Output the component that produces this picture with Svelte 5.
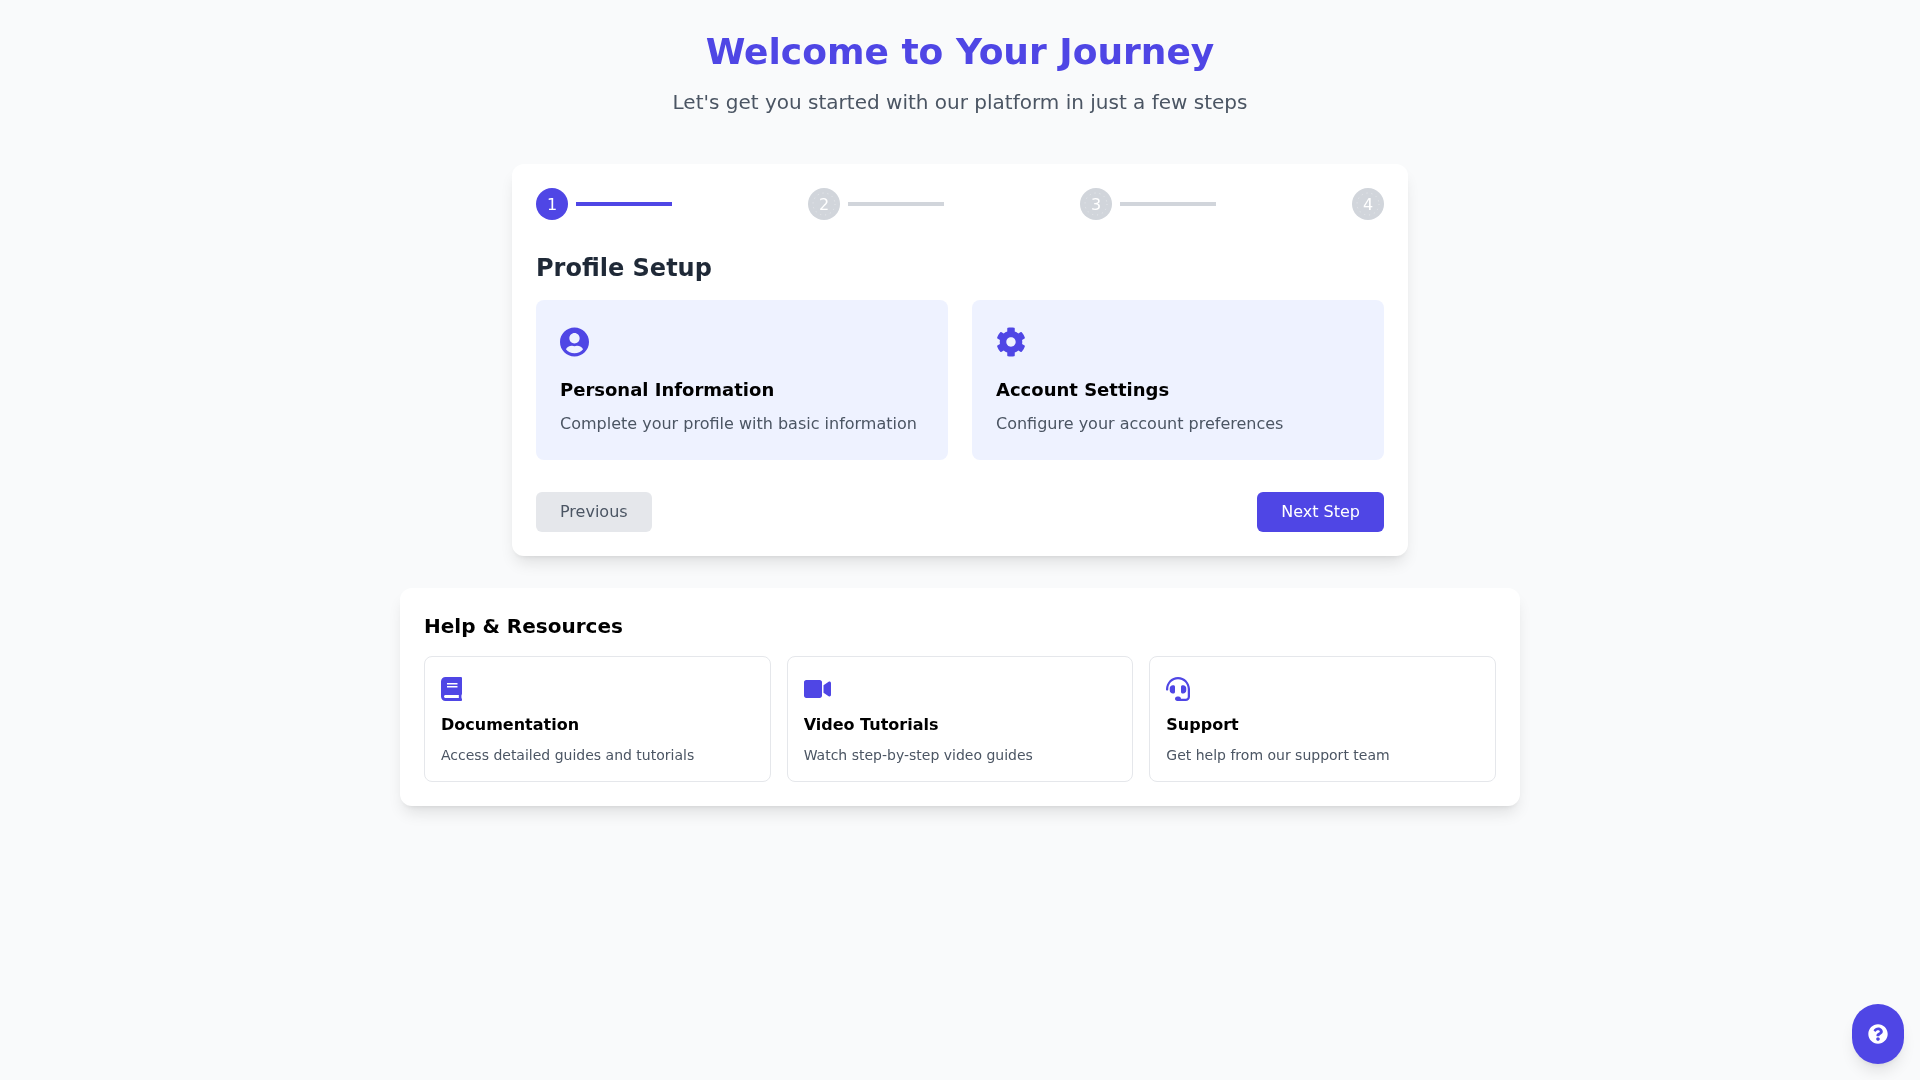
<script>
	const steps = [
		{ n: 1, active: true, line: true },
		{ n: 2, active: false, line: true },
		{ n: 3, active: false, line: true },
		{ n: 4, active: false, line: false }
	];

	const tasks = [
		{ icon: 'user', title: 'Personal Information', text: 'Complete your profile with basic information' },
		{ icon: 'gear', title: 'Account Settings', text: 'Configure your account preferences' }
	];

	const resources = [
		{ icon: 'book', title: 'Documentation', text: 'Access detailed guides and tutorials' },
		{ icon: 'video', title: 'Video Tutorials', text: 'Watch step-by-step video guides' },
		{ icon: 'headset', title: 'Support', text: 'Get help from our support team' }
	];
</script>

{#snippet icon(name)}
	{#if name === 'user'}
		<svg viewBox="0 0 496 512" width="29" height="30"><path d="M248 8C111 8 0 119 0 256s111 248 248 248 248-111 248-248S385 8 248 8zm0 96c48.600 0 88 39.400 88 88s-39.400 88-88 88-88-39.400-88-88 39.400-88 88-88zm0 344c-58.700 0-111.300-26.600-146.500-68.200 18.800-35.400 55.600-59.800 98.500-59.800 2.400 0 4.800.4 7.100 1.100 13 4.200 26.600 6.900 40.900 6.900 14.300 0 28-2.700 40.900-6.900 2.300-.7 4.700-1.100 7.100-1.100 42.900 0 79.700 24.400 98.500 59.800C359.300 421.400 306.700 448 248 448z"/></svg>
	{:else if name === 'gear'}
		<svg viewBox="0 0 512 512" width="30" height="30"><path d="M487.400 315.700l-42.600-24.600c4.300-23.200 4.300-47 0-70.200l42.600-24.600c4.900-2.800 7.100-8.600 5.500-14-11.100-35.600-30-67.800-54.700-94.600-3.800-4.100-10-5.100-14.800-2.300L380.800 110c-17.900-15.400-38.500-27.300-60.800-35.100V25.800c0-5.600-3.900-10.500-9.400-11.700-36.700-8.200-74.300-7.800-109.200 0-5.500 1.200-9.400 6.100-9.400 11.700V75c-22.200 7.900-42.800 19.800-60.800 35.100L88.700 85.500c-4.900-2.800-11-1.900-14.800 2.300-24.700 26.700-43.600 58.900-54.700 94.600-1.700 5.400.6 11.200 5.500 14L67.300 221c-4.300 23.200-4.300 47 0 70.200l-42.600 24.600c-4.900 2.800-7.100 8.600-5.500 14 11.100 35.600 30 67.800 54.700 94.600 3.800 4.100 10 5.100 14.800 2.300l42.600-24.600c17.900 15.400 38.500 27.300 60.800 35.100v49.200c0 5.600 3.900 10.500 9.400 11.700 36.700 8.200 74.300 7.800 109.200 0 5.500-1.200 9.400-6.100 9.400-11.700v-49.200c22.200-7.900 42.800-19.800 60.800-35.100l42.600 24.600c4.900 2.800 11 1.900 14.800-2.300 24.700-26.700 43.600-58.900 54.700-94.600 1.500-5.500-.7-11.300-5.600-14.100zM256 336c-44.100 0-80-35.900-80-80s35.900-80 80-80 80 35.900 80 80-35.900 80-80 80z"/></svg>
	{:else if name === 'book'}
		<svg viewBox="0 0 448 512" width="21" height="24"><path d="M448 360V24c0-13.300-10.700-24-24-24H96C43 0 0 43 0 96v320c0 53 43 96 96 96h328c13.300 0 24-10.700 24-24v-16c0-7.500-3.500-14.300-8.900-18.700-4.200-15.400-4.200-59.300 0-74.700 5.400-4.300 8.900-11.100 8.900-18.600zM128 134c0-3.300 2.700-6 6-6h212c3.300 0 6 2.700 6 6v20c0 3.300-2.700 6-6 6H134c-3.300 0-6-2.700-6-6v-20zm0 64c0-3.300 2.700-6 6-6h212c3.300 0 6 2.700 6 6v20c0 3.300-2.700 6-6 6H134c-3.300 0-6-2.700-6-6v-20zm253.400 250H96c-17.700 0-32-14.300-32-32 0-17.600 14.400-32 32-32h285.400c-1.900 17.100-1.900 46.900 0 64z"/></svg>
	{:else if name === 'video'}
		<svg viewBox="0 0 576 512" width="27" height="24"><path d="M336.200 64H47.800C21.400 64 0 85.400 0 111.800v288.400C0 426.600 21.400 448 47.800 448h288.400c26.400 0 47.800-21.400 47.800-47.800V111.800c0-26.400-21.400-47.800-47.800-47.800zm189.400 37.700L416 177.300v157.400l109.600 75.500c21.200 14.600 50.400-.3 50.400-25.800V127.500c0-25.400-29.100-40.400-50.400-25.800z"/></svg>
	{:else if name === 'headset'}
		<svg viewBox="0 0 512 512" width="24" height="24"><path d="M192 208c0-17.670-14.330-32-32-32h-16c-35.350 0-64 28.650-64 64v48c0 35.350 28.650 64 64 64h16c17.670 0 32-14.330 32-32V208zm176 144c35.350 0 64-28.650 64-64v-48c0-35.350-28.650-64-64-64h-16c-17.670 0-32 14.330-32 32v112c0 17.670 14.330 32 32 32h16zM256 0C113.180 0 4.580 118.830 0 256v16c0 8.840 7.160 16 16 16h16c8.840 0 16-7.160 16-16v-16c0-114.690 93.310-208 208-208s208 93.310 208 208h-.12c.08 2.430.12 165.720.12 165.720 0 23.350-18.930 42.280-42.280 42.280H320c0-26.510-21.490-48-48-48h-32c-26.510 0-48 21.490-48 48s21.490 48 48 48h181.720c49.860 0 90.280-40.420 90.280-90.280V256C507.420 118.830 398.820 0 256 0z"/></svg>
	{/if}
{/snippet}

<main class="page">
	<header class="intro">
		<h1>Welcome to Your Journey</h1>
		<p>Let's get you started with our platform in just a few steps</p>
	</header>

	<section class="wizard">
		<div class="stepper">
			{#each steps as step}
				<div class="step" class:last={!step.line}>
					<span class="dot" class:active={step.active}>
						{#if !step.active}
							<svg class="ring" viewBox="0 0 32 32" width="32" height="32"><circle cx="16" cy="16" r="11" /></svg>
						{/if}
						{step.n}
					</span>
					{#if step.line}
						<span class="line" class:active={step.active}></span>
					{/if}
				</div>
			{/each}
		</div>

		<h2>Profile Setup</h2>

		<div class="tasks">
			{#each tasks as task}
				<article class="task">
					<div class="icon-lg">{@render icon(task.icon)}</div>
					<h3>{task.title}</h3>
					<p>{task.text}</p>
				</article>
			{/each}
		</div>

		<div class="actions">
			<button class="btn prev">Previous</button>
			<button class="btn next">Next Step</button>
		</div>
	</section>

	<section class="help">
		<h2>Help &amp; Resources</h2>
		<div class="resources">
			{#each resources as res}
				<article class="resource">
					<div class="icon-md">{@render icon(res.icon)}</div>
					<h3>{res.title}</h3>
					<p>{res.text}</p>
				</article>
			{/each}
		</div>
	</section>
</main>

<button class="fab" aria-label="Help">
	<svg viewBox="0 0 512 512" width="20" height="20"><path d="M504 256c0 136.997-111.043 248-248 248S8 392.997 8 256C8 119.083 119.043 8 256 8s248 111.083 248 248zM262.655 90c-54.497 0-89.255 22.957-116.549 63.758-3.536 5.286-2.353 12.415 2.715 16.258l34.699 26.310c5.205 3.947 12.621 3.008 16.665-2.122 17.864-22.658 30.113-35.797 57.303-35.797 20.429 0 45.698 13.148 45.698 32.958 0 14.976-12.363 22.667-32.534 33.976C247.128 238.528 216 254.941 216 296v4c0 6.627 5.373 12 12 12h56c6.627 0 12-5.373 12-12v-1.333c0-28.462 83.186-29.647 83.186-106.667 0-58.002-60.165-102-116.531-102zM256 338c-25.365 0-46 20.635-46 46 0 25.364 20.635 46 46 46s46-20.636 46-46c0-25.365-20.635-46-46-46z"/></svg>
</button>

<style>
	:global(body) {
		margin: 0;
		background: #f9fafb;
		font-family: 'DejaVu Sans', sans-serif;
	}

	.page {
		display: flex;
		flex-direction: column;
		align-items: center;
		padding: 32px 0;
		will-change: transform;
	}

	.intro {
		text-align: center;
		margin-bottom: 48px;
	}

	h1 {
		margin: 0 0 16px;
		font-size: 36px;
		line-height: 40px;
		font-weight: 700;
		color: #4f46e5;
	}

	.intro p {
		margin: 0;
		font-size: 20px;
		line-height: 28px;
		color: #4b5563;
	}

	.wizard {
		box-sizing: border-box;
		width: 896px;
		padding: 24px;
		background: #fff;
		border-radius: 12px;
		box-shadow: 0 10px 15px -3px rgba(0, 0, 0, 0.1), 0 4px 6px -4px rgba(0, 0, 0, 0.1);
		margin-bottom: 32px;
	}

	.stepper {
		display: flex;
		justify-content: space-between;
		margin-bottom: 32px;
	}

	.step {
		display: flex;
		align-items: center;
		gap: 8px;
	}

	.dot {
		position: relative;
		display: flex;
		align-items: center;
		justify-content: center;
		width: 32px;
		height: 32px;
		border-radius: 50%;
		background: #d1d5db;
		color: #fff;
		font-size: 16px;
	}

	.dot.active {
		background: #4f46e5;
	}

	.ring {
		position: absolute;
		inset: 0;
		fill: none;
		stroke: #fff;
		stroke-width: 1;
		stroke-dasharray: 1 4;
		opacity: 0.45;
	}

	.line {
		display: block;
		width: 96px;
		height: 4px;
		background: #d1d5db;
	}

	.line.active {
		background: #4f46e5;
	}

	.wizard h2 {
		margin: 0 0 16px;
		font-size: 24px;
		line-height: 32px;
		font-weight: 700;
		color: #1f2937;
	}

	.tasks {
		display: grid;
		grid-template-columns: 1fr 1fr;
		gap: 24px;
		margin-bottom: 32px;
	}

	.task {
		padding: 24px;
		background: #eef2ff;
		border-radius: 8px;
	}

	.icon-lg,
	.icon-md {
		display: flex;
		align-items: center;
		fill: #4f46e5;
	}

	.icon-lg {
		height: 36px;
		margin-bottom: 16px;
	}

	.icon-md {
		height: 32px;
		margin-bottom: 8px;
	}

	.task h3 {
		margin: 0 0 8px;
		font-size: 18px;
		line-height: 28px;
		font-weight: 700;
		color: #000;
	}

	.task p {
		margin: 0;
		font-size: 16px;
		line-height: 24px;
		color: #4b5563;
	}

	.actions {
		display: flex;
		justify-content: space-between;
	}

	.btn {
		padding: 8px 24px;
		border: 0;
		border-radius: 6px;
		font-family: inherit;
		font-size: 16px;
		line-height: 24px;
	}

	.prev {
		background: #e5e7eb;
		color: #4b5563;
	}

	.next {
		background: #4f46e5;
		color: #fff;
	}

	.help {
		box-sizing: border-box;
		width: 1120px;
		padding: 24px;
		background: #fff;
		border-radius: 12px;
		box-shadow: 0 10px 15px -3px rgba(0, 0, 0, 0.1), 0 4px 6px -4px rgba(0, 0, 0, 0.1);
	}

	.help h2 {
		margin: 0 0 16px;
		font-size: 20px;
		line-height: 28px;
		font-weight: 700;
		color: #000;
	}

	.resources {
		display: grid;
		grid-template-columns: repeat(3, 1fr);
		gap: 16px;
	}

	.resource {
		padding: 16px;
		border: 1px solid #e5e7eb;
		border-radius: 8px;
	}

	.resource h3 {
		margin: 0 0 8px;
		font-size: 16px;
		line-height: 24px;
		font-weight: 700;
		color: #000;
	}

	.resource p {
		margin: 0;
		font-size: 14px;
		line-height: 20px;
		color: #4b5563;
	}

	.fab {
		position: fixed;
		right: 16px;
		bottom: 16px;
		display: flex;
		align-items: center;
		justify-content: center;
		width: 52px;
		height: 60px;
		padding: 0;
		border: 0;
		border-radius: 26px;
		background: #4f46e5;
		fill: #fff;
		box-shadow: 0 10px 15px -3px rgba(0, 0, 0, 0.1), 0 4px 6px -4px rgba(0, 0, 0, 0.1);
	}
</style>
